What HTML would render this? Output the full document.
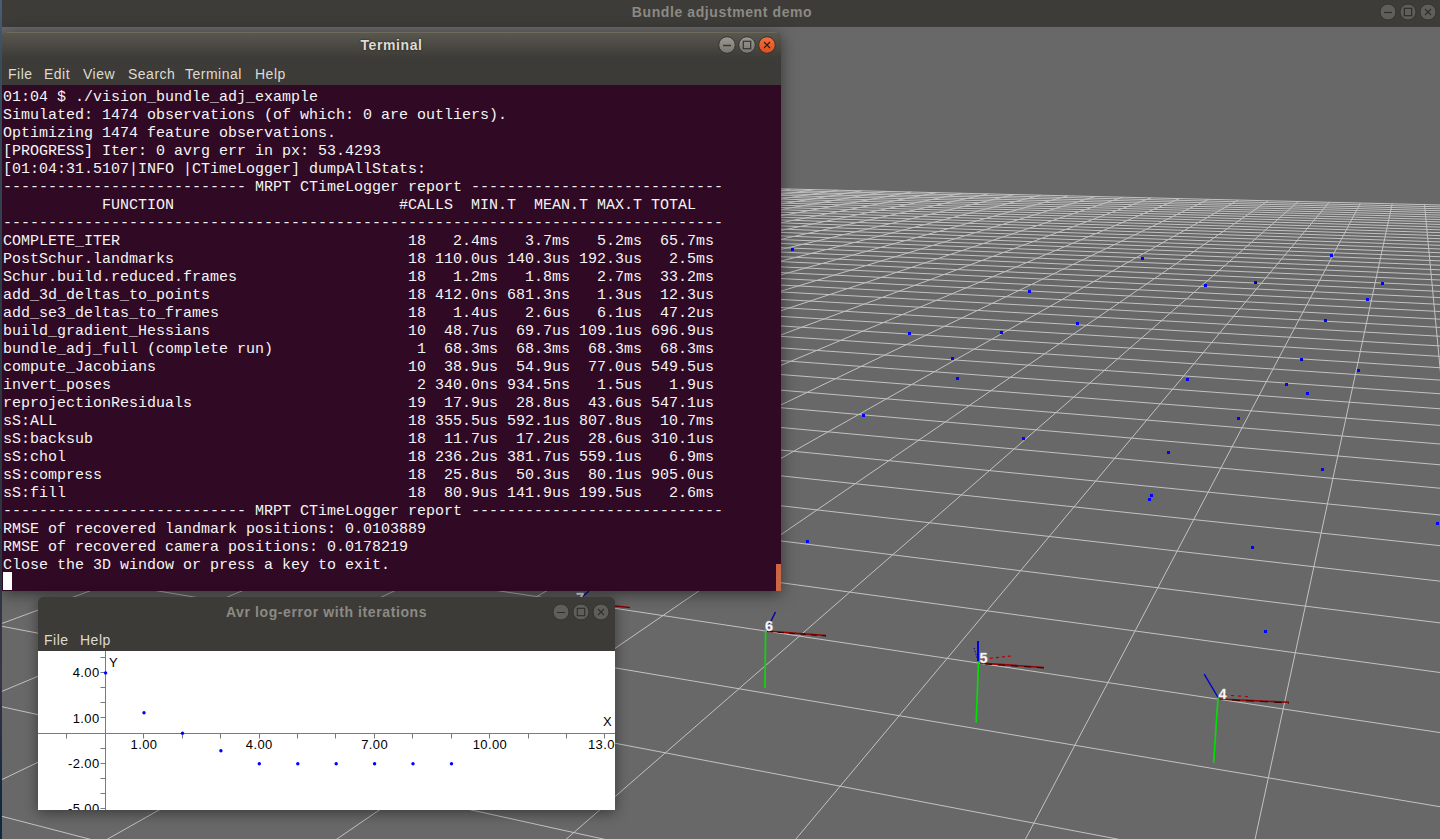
<!DOCTYPE html>
<html><head><meta charset="utf-8">
<style>
*{box-sizing:border-box}
html,body{margin:0;padding:0}
body{width:1440px;height:839px;overflow:hidden;position:relative;background:#686868;font-family:"Liberation Sans",sans-serif}
.abs{position:absolute}
svg{display:block}
#scene{position:absolute;left:0;top:0}
#topbar{left:0;top:0;width:1440px;height:27px;background:#3d3c38}
#topbar .ttl{position:absolute;left:2px;width:1440px;top:4px;text-align:center;color:#8c8a84;font-weight:bold;font-size:14px;letter-spacing:0.6px}
#lstrip{left:0;top:0;width:2px;height:839px;background:linear-gradient(#4a5f78 0,#3a4c5e 60px,#2c3a44 300px,#2b3540 560px,#3a3346 680px,#0e2a40 800px);z-index:5}
#term{left:2px;top:32px;width:779px;height:559px;background:#3c3b37;border-radius:6px 6px 0 0;overflow:hidden}
#termshadow{left:2px;top:32px;width:779px;height:559px;border-radius:6px 6px 0 0;box-shadow:0 3px 16px rgba(0,0,0,0.5)}
#term .tb{position:absolute;left:0;top:0;width:779px;height:26px;background:linear-gradient(#5a5850,#3c3b37);box-shadow:inset 0 1px #6c6a5a}
#term .tb .ttl{position:absolute;left:0;width:779px;top:5px;text-align:center;color:#dfdbd2;font-weight:bold;font-size:14px;letter-spacing:0.6px;text-shadow:0 0 2px #1a1916}
#term .mb{position:absolute;left:0;top:26px;width:779px;height:27px;background:#3c3b37;color:#dfdbd2;font-size:14px;letter-spacing:0.5px}
#term .mb span{position:absolute;top:8px}
#term pre{position:absolute;left:1px;top:57px;margin:0;font-family:"Liberation Mono",monospace;font-size:15px;line-height:18px;color:#f4f4f4;white-space:pre}
#cursor{left:1px;top:540px;width:9px;height:18px;background:#ffffff}
#sbar{left:774px;top:532px;width:5px;height:27px;background:#cb6543}
#plot{left:38px;top:597px;width:577px;height:213px;background:#3c3b37;border-radius:6px 6px 0 0;overflow:hidden}
#plotshadow{left:38px;top:597px;width:577px;height:213px;border-radius:6px 6px 0 0;box-shadow:0 3px 14px rgba(0,0,0,0.45)}
#plot .tb{position:absolute;left:0;top:0;width:577px;height:31px;background:#3c3b37}
#plot .tb .ttl{position:absolute;left:0;width:577px;top:7px;text-align:center;color:#8c8a84;font-weight:bold;font-size:14px;letter-spacing:0.6px}
#plot .mb{position:absolute;left:0;top:30px;width:577px;height:24px;background:#3c3b37;color:#dfdbd2;font-size:14px;letter-spacing:0.5px}
#plot .mb span{position:absolute;top:5px}
#plot svg{position:absolute;left:0;top:54px}
.btns{position:absolute}
</style></head><body>
<svg id="scene" width="1440" height="839" viewBox="0 0 1440 839">
<path d="M-608.5 154.8L-500561.0 13631.1M-599.9 155.0L-496436.1 13628.9M-591.3 155.2L-492311.2 13626.7M-582.6 155.5L-488186.3 13624.5M-573.8 155.7L-484061.4 13622.3M-564.9 155.9L-479936.5 13620.1M-556.0 156.1L-475811.6 13617.9M-547.0 156.3L-471686.7 13615.7M-537.9 156.5L-467561.8 13613.5M-528.8 156.8L-463436.9 13611.3M-519.6 157.0L-459312.0 13609.1M-510.3 157.2L-455187.1 13606.9M-500.9 157.5L-451062.2 13604.8M-491.4 157.7L-446937.3 13602.6M-481.9 157.9L-442812.4 13600.4M-472.3 158.2L-438687.5 13598.2M-462.6 158.4L-434562.6 13596.0M-452.8 158.6L-430437.7 13593.8M-442.9 158.9L-426312.8 13591.6M-433.0 159.1L-422187.9 13589.4M-422.9 159.4L-418063.0 13587.2M-412.8 159.6L-413938.1 13585.0M-402.6 159.9L-409813.2 13582.8M-392.3 160.1L-405688.3 13580.6M-381.9 160.4L-401563.4 13578.4M-371.4 160.6L-397438.5 13576.2M-360.8 160.9L-393313.6 13574.0M-350.1 161.1L-389188.7 13571.8M-339.3 161.4L-385063.8 13569.6M-328.5 161.7L-380938.9 13567.4M-317.5 161.9L-376814.0 13565.2M-306.4 162.2L-372689.1 13563.0M-295.3 162.5L-368564.2 13560.9M-284.0 162.8L-364439.3 13558.7M-272.6 163.0L-360314.4 13556.5M-261.1 163.3L-356189.5 13554.3M-249.5 163.6L-352064.6 13552.1M-237.8 163.9L-347939.7 13549.9M-226.0 164.2L-343814.8 13547.7M-214.1 164.5L-339689.9 13545.5M-202.0 164.8L-335565.0 13543.3M-189.9 165.1L-331440.1 13541.1M-177.6 165.4L-327315.2 13538.9M-165.2 165.7L-323190.3 13536.7M-152.7 166.0L-319065.4 13534.5M-140.1 166.3L-314940.5 13532.3M-127.3 166.6L-310815.6 13530.1M-114.4 166.9L-306690.7 13527.9M-101.4 167.2L-302565.8 13525.7M-88.3 167.6L-298440.9 13523.5M-75.0 167.9L-294316.0 13521.3M-61.6 168.2L-290191.1 13519.1M-48.1 168.5L-286066.2 13517.0M-34.4 168.9L-281941.3 13514.8M-20.6 169.2L-277816.4 13512.6M-6.7 169.6L-273691.5 13510.4M7.4 169.9L-269566.6 13508.2M21.7 170.3L-265441.7 13506.0M36.1 170.6L-261316.8 13503.8M50.6 171.0L-257191.9 13501.6M65.3 171.3L-253067.0 13499.4M80.2 171.7L-248942.1 13497.2M95.2 172.1L-244817.2 13495.0M110.4 172.4L-240692.3 13492.8M125.7 172.8L-236567.4 13490.6M141.2 173.2L-232442.5 13488.4M156.9 173.6L-228317.6 13486.2M172.7 174.0L-224192.7 13484.0M188.7 174.4L-220067.8 13481.8M204.9 174.7L-215942.9 13479.6M221.3 175.1L-211818.0 13477.4M237.8 175.6L-207693.1 13475.2M254.5 176.0L-203568.2 13473.1M271.5 176.4L-199443.3 13470.9M288.6 176.8L-195318.4 13468.7M305.9 177.2L-191193.5 13466.5M323.4 177.7L-187068.6 13464.3M341.1 178.1L-182943.7 13462.1M359.1 178.5L-178818.8 13459.9M377.2 179.0L-174693.9 13457.7M395.5 179.4L-170569.0 13455.5M414.1 179.9L-166444.2 13453.3M432.9 180.3L-162319.3 13451.1M451.9 180.8L-158194.4 13448.9M471.1 181.3L-154069.5 13446.7M490.6 181.7L-149944.6 13444.5M510.3 182.2L-145819.7 13442.3M530.2 182.7L-141694.8 13440.1M550.4 183.2L-137569.9 13437.9M570.9 183.7L-133445.0 13435.7M591.6 184.2L-129320.1 13433.5M612.5 184.7L-125195.2 13431.3M633.7 185.3L-121070.3 13429.2M655.2 185.8L-116945.4 13427.0M677.0 186.3L-112820.5 13424.8M699.1 186.9L-108695.6 13422.6M721.4 187.4L-104570.7 13420.4M744.0 188.0L-100445.8 13418.2M766.9 188.5L-96320.9 13416.0M790.2 189.1L-92196.0 13413.8M813.7 189.7L-88071.1 13411.6M837.6 190.2L-83946.2 13409.4M861.7 190.8L-79821.3 13407.2M886.2 191.4L-75696.4 13405.0M911.1 192.0L-71571.5 13402.8M936.3 192.7L-67446.6 13400.6M961.8 193.3L-63321.7 13398.4M987.7 193.9L-59196.8 13396.2M1013.9 194.6L-55071.9 13394.0M1040.5 195.2L-50947.0 13391.8M1067.5 195.9L-46822.1 13389.6M1094.9 196.6L-42697.2 13387.4M1122.7 197.2L-38572.3 13385.3M1150.9 197.9L-34447.4 13383.1M1179.5 198.6L-30322.5 13380.9M1208.6 199.3L-26197.6 13378.7M1238.0 200.1L-22072.7 13376.5M1267.9 200.8L-17947.8 13374.3M1298.3 201.5L-13822.9 13372.1M1329.1 202.3L-9698.0 13369.9M1360.4 203.1L-5573.1 13367.7M1392.2 203.8L-1448.2 13365.5M1424.5 204.6L2676.7 13363.3M1457.2 205.4L6801.6 13361.1M1490.5 206.2L10926.5 13358.9M1524.4 207.1L15051.4 13356.7M1558.8 207.9L19176.3 13354.5M1593.7 208.8L23301.2 13352.3M1629.2 209.6L27426.1 13350.1M1665.3 210.5L31551.0 13347.9M1702.0 211.4L35675.9 13345.7M1739.3 212.3L39800.8 13343.5M1777.3 213.3L43925.7 13341.4M1815.8 214.2L48050.6 13339.2M1855.1 215.2L52175.5 13337.0M1895.0 216.2L56300.4 13334.8M1935.7 217.2L60425.3 13332.6M1977.0 218.2L64550.2 13330.4M2019.1 219.2L68675.1 13328.2M2062.0 220.2L72800.0 13326.0M2105.6 221.3L76924.9 13323.8M2150.0 222.4L81049.8 13321.6M2195.3 223.5L85174.7 13319.4M2241.4 224.6L89299.6 13317.2M2288.4 225.8L93424.5 13315.0M2336.2 227.0L97549.4 13312.8M2385.0 228.2L101674.3 13310.6M2434.7 229.4L105799.2 13308.4M2485.4 230.6L109924.1 13306.2M2537.1 231.9L114049.0 13304.0M2589.8 233.2L118173.9 13301.8M2643.6 234.5L122298.8 13299.6M2698.5 235.8L126423.7 13297.5M2754.5 237.2L130548.6 13295.3M2811.7 238.6L134673.5 13293.1M2870.1 240.0L138798.4 13290.9M2929.7 241.5L142923.3 13288.7M2990.7 243.0L147048.2 13286.5M3052.9 244.5L151173.1 13284.3M3116.5 246.1L155298.0 13282.1M3181.5 247.7L159422.9 13279.9M3248.0 249.3L163547.8 13277.7M3315.9 251.0L167672.7 13275.5M3385.5 252.7L171797.6 13273.3M3456.6 254.4L175922.5 13271.1M3529.4 256.2L180047.4 13268.9M3604.0 258.0L184172.3 13266.7M3680.3 259.9L188297.2 13264.5M3758.5 261.8L192422.1 13262.3M3838.6 263.8L196547.0 13260.1M3920.8 265.8L200671.9 13257.9M4005.0 267.8L204796.8 13255.7M4091.3 270.0L208921.7 13253.6M4179.9 272.1L213046.6 13251.4M4270.8 274.4L217171.5 13249.2M4364.2 276.6L221296.4 13247.0M4460.1 279.0L225421.3 13244.8M4558.5 281.4L229546.2 13242.6M4659.7 283.9L233671.1 13240.4M4763.8 286.4L237796.0 13238.2M4870.8 289.1L241920.9 13236.0M4980.9 291.8L246045.8 13233.8M5094.3 294.5L250170.7 13231.6M5211.0 297.4L254295.6 13229.4M5331.3 300.3L258420.5 13227.2M5455.2 303.4L262545.4 13225.0M5583.0 306.5L266670.3 13222.8M5714.9 309.7L270795.2 13220.6M5851.0 313.1L274920.1 13218.4M5991.5 316.5L279045.0 13216.2M6136.8 320.1L283169.9 13214.0M6286.9 323.8L287294.8 13211.8M6442.2 327.6L291419.7 13209.7M6602.9 331.5L295544.6 13207.5M6769.4 335.6L299669.5 13205.3M6941.9 339.8L303794.4 13203.1M7120.7 344.2L307919.3 13200.9M7306.3 348.7L312044.2 13198.7M7499.1 353.5L316169.1 13196.5M7699.3 358.4L320294.0 13194.3M7907.5 363.5L324418.9 13192.1M8124.2 368.8L328543.8 13189.9M8350.0 374.3L332668.7 13187.7M8585.2 380.1L336793.6 13185.5M8830.7 386.1L340918.5 13183.3M9087.1 392.4L345043.4 13181.1M9355.0 398.9L349168.3 13178.9M9635.4 405.8L353293.2 13176.7M9929.1 413.0L357418.1 13174.5M10237.1 420.5L361543.0 13172.3M10560.4 428.5L365667.9 13170.1M10900.2 436.8L369792.8 13167.9M11257.8 445.5L373917.7 13165.7M11634.7 454.8L378042.6 13163.6M12032.4 464.5L382167.5 13161.4M12452.8 474.8L386292.4 13159.2M12897.8 485.7L390417.3 13157.0M13369.6 497.3L394542.2 13154.8M13870.8 509.6L398667.1 13152.6M14404.2 522.6L402792.0 13150.4M14972.9 536.6L406916.9 13148.2M15580.6 551.4L411041.8 13146.0M16231.6 567.4L415166.7 13143.8M16930.5 584.5L419291.6 13141.6M17682.8 602.9L423416.5 13139.4M18494.9 622.8L427541.4 13137.2M19374.4 644.4L431666.3 13135.0M20329.7 667.8L435791.2 13132.8M21371.4 693.3L439916.1 13130.6M22511.5 721.3L444041.0 13128.4M23764.8 752.0L448165.9 13126.2M25149.0 785.9L452290.8 13124.0M26685.7 823.5L456415.7 13121.8M28401.5 865.6L460540.6 13119.7M30329.9 912.8L464665.5 13117.5M32512.8 966.3L468790.4 13115.3M35004.2 1027.3L472915.3 13113.1M37874.5 1097.6L477040.2 13110.9M41217.3 1179.5L481165.1 13108.7M45159.5 1276.1L485290.0 13106.5M49878.5 1391.7L489414.9 13104.3M-608.5 154.8L49878.5 1391.7M-626.7 155.3L63545.0 1755.9M-645.3 155.8L87946.5 2406.2M-664.2 156.3L143911.8 3897.5M-683.4 156.8L404813.3 10849.9M-703.0 157.4L481076.4 13108.7M-723.0 157.9L471865.8 13113.6M-743.3 158.5L462655.2 13118.5M-764.1 159.0L453444.5 13123.4M-785.2 159.6L444233.9 13128.3M-806.8 160.2L435023.3 13133.2M-828.8 160.8L425812.7 13138.1M-851.2 161.4L416602.0 13143.0M-874.1 162.0L407391.4 13147.9M-897.4 162.6L398180.8 13152.8M-921.2 163.2L388970.2 13157.7M-945.6 163.9L379759.5 13162.6M-970.4 164.6L370548.9 13167.5M-995.8 165.3L361338.3 13172.4M-1021.7 166.0L352127.7 13177.3M-1048.1 166.7L342917.1 13182.2M-1075.2 167.4L333706.4 13187.1M-1102.9 168.1L324495.8 13192.0M-1131.1 168.9L315285.2 13197.0M-1160.1 169.7L306074.6 13201.9M-1189.6 170.5L296863.9 13206.8M-1219.9 171.3L287653.3 13211.7M-1250.9 172.1L278442.7 13216.6M-1282.6 173.0L269232.1 13221.5M-1315.1 173.9L260021.4 13226.4M-1348.4 174.8L250810.8 13231.3M-1382.5 175.7L241600.2 13236.2M-1417.4 176.6L232389.6 13241.1M-1453.3 177.6L223178.9 13246.0M-1490.0 178.6L213968.3 13250.9M-1527.7 179.6L204757.7 13255.8M-1566.4 180.6L195547.1 13260.7M-1606.1 181.7L186336.4 13265.6M-1646.9 182.8L177125.8 13270.5M-1688.9 183.9L167915.2 13275.4M-1732.0 185.1L158704.6 13280.3M-1776.3 186.3L149493.9 13285.2M-1821.8 187.5L140283.3 13290.1M-1868.7 188.8L131072.7 13295.0M-1917.0 190.1L121862.1 13299.9M-1966.7 191.4L112651.4 13304.8M-2017.9 192.8L103440.8 13309.7M-2070.7 194.2L94230.2 13314.6M-2125.1 195.7L85019.6 13319.5M-2181.3 197.2L75808.9 13324.4M-2239.2 198.8L66598.3 13329.3M-2299.1 200.4L57387.7 13334.2M-2361.0 202.1L48177.1 13339.1M-2424.9 203.8L38966.4 13344.0M-2491.1 205.6L29755.8 13348.9M-2559.6 207.4L20545.2 13353.8M-2630.5 209.3L11334.6 13358.7M-2704.0 211.3L2124.0 13363.6M-2780.2 213.4L-7086.7 13368.5M-2859.3 215.5L-16297.3 13373.4M-2941.5 217.7L-25507.9 13378.3M-3026.8 220.0L-34718.5 13383.2M-3115.6 222.4L-43929.2 13388.1M-3208.0 224.9L-53139.8 13393.0M-3304.3 227.5L-62350.4 13397.9M-3404.6 230.2L-71561.0 13402.8M-3509.3 233.0L-80771.7 13407.7M-3618.7 236.0L-89982.3 13412.6M-3733.0 239.0L-99192.9 13417.5M-3852.6 242.3L-108403.5 13422.4M-3977.9 245.6L-117614.2 13427.3M-4109.4 249.2L-126824.8 13432.2M-4247.4 252.9L-136035.4 13437.1M-4392.4 256.8L-145246.0 13442.0M-4545.1 260.9L-154456.7 13446.9M-4706.1 265.3L-163667.3 13451.8M-4876.0 269.9L-172877.9 13456.7M-5055.6 274.7L-182088.5 13461.6M-5245.7 279.8L-191299.2 13466.5M-5447.4 285.3L-200509.8 13471.4M-5661.6 291.0L-209720.4 13476.3M-5889.7 297.2L-218931.0 13481.2M-6132.9 303.7L-228141.7 13486.1M-6392.9 310.7L-237352.3 13491.0M-6671.5 318.2L-246562.9 13495.9M-6970.6 326.3L-255773.5 13500.8M-7292.8 335.0L-264984.2 13505.7M-7640.7 344.4L-274194.8 13510.6M-8017.5 354.5L-283405.4 13515.5M-8427.1 365.6L-292616.0 13520.4M-8873.9 377.6L-301826.7 13525.3M-9363.2 390.8L-311037.3 13530.2M-9901.3 405.3L-320247.9 13535.1M-10496.0 421.3L-329458.5 13540.0M-11156.7 439.1L-338669.2 13544.9M-11894.9 459.0L-347879.8 13549.8M-12725.3 481.4L-357090.4 13554.7M-13666.2 506.8L-366301.0 13559.6M-14741.2 535.8L-375511.6 13564.5M-15981.3 569.2L-384722.3 13569.5M-17427.6 608.2L-393932.9 13574.4M-19136.1 654.2L-403143.5 13579.3M-21185.4 709.5L-412354.1 13584.2M-23688.7 776.9L-421564.8 13589.1M-26815.6 861.2L-430775.4 13594.0M-30832.3 969.5L-439986.0 13598.9M-36181.7 1113.7L-449196.6 13603.8M-43658.9 1315.2L-458407.3 13608.7M-54848.5 1616.9L-467617.9 13613.6M-73428.6 2117.7L-476828.5 13618.5M-110331.1 3112.4L-486039.1 13623.4M-219019.2 6042.1L-495249.8 13628.3" stroke="#c2c2c2" stroke-width="1" fill="none"/>
<g fill="#0000ff"><rect x="791" y="248" width="3" height="3"/><rect x="1141" y="257" width="3" height="3"/><rect x="1330" y="254" width="3" height="3"/><rect x="1028" y="290" width="3" height="3"/><rect x="1204" y="284" width="3" height="3"/><rect x="1254" y="281" width="3" height="3"/><rect x="1255" y="282" width="2" height="2" fill="#000030"/><rect x="1381" y="282" width="3" height="3"/><rect x="1366" y="298" width="3" height="3"/><rect x="1324" y="319" width="3" height="3"/><rect x="908" y="332" width="3" height="3"/><rect x="1000" y="331" width="3" height="3"/><rect x="1076" y="322" width="3" height="3"/><rect x="951" y="357" width="3" height="3"/><rect x="956" y="377" width="3" height="3"/><rect x="1300" y="358" width="3" height="3"/><rect x="1301" y="359" width="2" height="2" fill="#000030"/><rect x="1357" y="369" width="3" height="3"/><rect x="1186" y="378" width="3" height="3"/><rect x="1285" y="383" width="3" height="3"/><rect x="1306" y="392" width="3" height="3"/><rect x="862" y="414" width="3" height="3"/><rect x="1237" y="417" width="3" height="3"/><rect x="1022" y="437" width="3" height="3"/><rect x="1167" y="451" width="3" height="3"/><rect x="1321" y="468" width="3" height="3"/><rect x="1150" y="494" width="3" height="3"/><rect x="1148" y="498" width="3" height="3"/><rect x="806" y="540" width="3" height="3"/><rect x="1251" y="546" width="3" height="3"/><rect x="1436" y="522" width="3" height="3"/><rect x="1264" y="630" width="3" height="3"/></g>
<g fill="none" stroke-linecap="butt">
<path d="M765.6 631L765 688" stroke="#00e000" stroke-width="1.7" />
<path d="M767 631L826 635.5" stroke="#9a0000" stroke-width="1.6" />
<path d="M767 631.5L826 636" stroke="#300000" stroke-width="1" stroke-dasharray="6 5"/>
<path d="M766.5 630L775.5 612" stroke="#0000b0" stroke-width="1.4" />
<path d="M978 641L978 661" stroke="#0000e0" stroke-width="2" />
<path d="M978.5 662L976.2 722.5" stroke="#00e000" stroke-width="1.7" />
<path d="M980 663L1044 667.5" stroke="#9a0000" stroke-width="1.6" />
<path d="M985 664L1044 668" stroke="#300000" stroke-width="1" stroke-dasharray="7 6"/>
<path d="M984 659L1011 656" stroke="#b00000" stroke-width="1.2" stroke-dasharray="3 3"/>
<path d="M974 648L977.5 659" stroke="#0000c0" stroke-width="1" stroke-dasharray="1.5 1.5"/>
<path d="M1204.2 674.2L1217.8 697" stroke="#0000d0" stroke-width="1.4" />
<path d="M1218 698L1213.6 762.7" stroke="#00e000" stroke-width="1.7" />
<path d="M1219 699L1289 702.3" stroke="#9a0000" stroke-width="1.6" />
<path d="M1232 700L1289 703" stroke="#300000" stroke-width="1" stroke-dasharray="8 6"/>
<path d="M1224 695L1252 697" stroke="#b00000" stroke-width="1.2" stroke-dasharray="3 4"/>
<path d="M582 597L589 591" stroke="#0000b0" stroke-width="1.4" />
<path d="M615 606L630 607.5" stroke="#8a0000" stroke-width="1.6" />
<g font-family="Liberation Sans" font-size="14.5" font-weight="bold" fill="#ffffff" stroke="#d0d0d0" stroke-width="0.3">
<text x="765" y="630.5">6</text><text x="979.5" y="662.5">5</text><text x="1218.5" y="698.5">4</text><text x="576" y="603">7</text>
</g>
</g>
</svg>
<div id="lstrip" class="abs"></div>
<div id="topbar" class="abs"><div class="ttl">Bundle adjustment demo</div>
<svg class="btns" style="left:1376px;top:0px" width="64" height="26" viewBox="0 0 64 26">
<g stroke="#34332f" stroke-width="1" fill="#5f5e58"><circle cx="12" cy="12" r="8"/><circle cx="32" cy="12" r="8"/><circle cx="52" cy="12" r="8"/></g>
<g stroke="#2f2e2a" stroke-width="1.2" fill="none"><path d="M8 12.5H16"/><rect x="28.3" y="8.3" width="7.4" height="7.4"/><path d="M49 9L55 15M55 9L49 15"/></g>
</svg>
</div>

<div id="termshadow" class="abs"></div>
<div id="term" class="abs">
<div class="tb"><div class="ttl">Terminal</div>
<svg class="btns" style="left:714px;top:2px" width="64" height="22" viewBox="0 0 64 22">
<defs><linearGradient id="gg" x1="0" y1="0" x2="0" y2="1"><stop offset="0" stop-color="#9a9892"/><stop offset="1" stop-color="#78766f"/></linearGradient>
<linearGradient id="og" x1="0" y1="0" x2="0" y2="1"><stop offset="0" stop-color="#f3703e"/><stop offset="1" stop-color="#de4e1c"/></linearGradient></defs>
<g stroke="#33322e" stroke-width="1"><circle cx="11" cy="11" r="8.3" fill="url(#gg)"/><circle cx="31" cy="11" r="8.3" fill="url(#gg)"/><circle cx="51" cy="11" r="8.3" fill="url(#og)"/></g>
<g stroke="#3a3935" stroke-width="1.3" fill="none"><path d="M7 11.5H15"/><rect x="27.3" y="7.3" width="7.4" height="7.4"/><path stroke="#2a1a10" stroke-width="1.1" d="M48 8L54 14M54 8L48 14"/></g>
</svg>
</div>
<div class="mb"><span style="left:6px">File</span><span style="left:42px">Edit</span><span style="left:81px">View</span><span style="left:126px">Search</span><span style="left:183px">Terminal</span><span style="left:253px">Help</span></div>
<div class="abs" style="left:0;top:53px;width:779px;height:506px;background:#300a24"></div>
<pre>01:04 $ ./vision_bundle_adj_example
Simulated: 1474 observations (of which: 0 are outliers).
Optimizing 1474 feature observations.
[PROGRESS] Iter: 0 avrg err in px: 53.4293
[01:04:31.5107|INFO |CTimeLogger] dumpAllStats:
--------------------------- MRPT CTimeLogger report ----------------------------
           FUNCTION                         #CALLS  MIN.T  MEAN.T MAX.T TOTAL
--------------------------------------------------------------------------------
COMPLETE_ITER                                18   2.4ms   3.7ms   5.2ms  65.7ms
PostSchur.landmarks                          18 110.0us 140.3us 192.3us   2.5ms
Schur.build.reduced.frames                   18   1.2ms   1.8ms   2.7ms  33.2ms
add_3d_deltas_to_points                      18 412.0ns 681.3ns   1.3us  12.3us
add_se3_deltas_to_frames                     18   1.4us   2.6us   6.1us  47.2us
build_gradient_Hessians                      10  48.7us  69.7us 109.1us 696.9us
bundle_adj_full (complete run)                1  68.3ms  68.3ms  68.3ms  68.3ms
compute_Jacobians                            10  38.9us  54.9us  77.0us 549.5us
invert_poses                                  2 340.0ns 934.5ns   1.5us   1.9us
reprojectionResiduals                        19  17.9us  28.8us  43.6us 547.1us
sS:ALL                                       18 355.5us 592.1us 807.8us  10.7ms
sS:backsub                                   18  11.7us  17.2us  28.6us 310.1us
sS:chol                                      18 236.2us 381.7us 559.1us   6.9ms
sS:compress                                  18  25.8us  50.3us  80.1us 905.0us
sS:fill                                      18  80.9us 141.9us 199.5us   2.6ms
--------------------------- MRPT CTimeLogger report ----------------------------
RMSE of recovered landmark positions: 0.0103889
RMSE of recovered camera positions: 0.0178219
Close the 3D window or press a key to exit.</pre>
<div id="cursor" class="abs"></div>
<div id="sbar" class="abs"></div>
</div>

<div id="plotshadow" class="abs"></div>
<div id="plot" class="abs">
<div class="tb"><div class="ttl">Avr log-error with iterations</div>
<svg class="btns" style="left:512px;top:5px" width="64" height="22" viewBox="0 0 64 22">
<g stroke="#34332f" stroke-width="1" fill="#5f5e58"><circle cx="11" cy="10" r="8"/><circle cx="31" cy="10" r="8"/><circle cx="51" cy="10" r="8"/></g>
<g stroke="#2f2e2a" stroke-width="1.1" fill="none"><path d="M7 10.5H15"/><rect x="27.3" y="6.3" width="7.4" height="7.4"/><path d="M48 7L54 13M54 7L48 13"/></g>
</svg>
</div>
<div class="mb"><span style="left:6px">File</span><span style="left:42px">Help</span></div>
<div class="abs" style="left:0;top:54px;width:577px;height:159px;background:#fff"></div>
<svg width="577" height="159" viewBox="0 0 577 159">
<g stroke="#7a7a7a" stroke-width="1" fill="none">
<path d="M67.5 0V159M0 82.5H577"/>
<path d="M28.5 82.5V87.5"/>
<path d="M105.5 82.5V87.5"/>
<path d="M144.5 82.5V87.5"/>
<path d="M182.5 82.5V87.5"/>
<path d="M221.5 82.5V87.5"/>
<path d="M259.5 82.5V87.5"/>
<path d="M297.5 82.5V87.5"/>
<path d="M336.5 82.5V87.5"/>
<path d="M374.5 82.5V87.5"/>
<path d="M413.5 82.5V87.5"/>
<path d="M451.5 82.5V87.5"/>
<path d="M490.5 82.5V87.5"/>
<path d="M528.5 82.5V87.5"/>
<path d="M566.5 82.5V87.5"/>
<path d="M62.5 6.5H67.5"/>
<path d="M62.5 21.5H67.5"/>
<path d="M62.5 36.5H67.5"/>
<path d="M62.5 51.5H67.5"/>
<path d="M62.5 66.5H67.5"/>
<path d="M62.5 97.5H67.5"/>
<path d="M62.5 112.5H67.5"/>
<path d="M62.5 127.5H67.5"/>
<path d="M62.5 142.5H67.5"/>
<path d="M62.5 157.5H67.5"/>
</g>
<g font-family="Liberation Sans" font-size="13" fill="#000" letter-spacing="0.4">
<text x="61.6" y="26.2" text-anchor="end">4.00</text>
<text x="61.6" y="71.5" text-anchor="end">1.00</text>
<text x="61.6" y="116.8" text-anchor="end">-2.00</text>
<text x="61.6" y="162.1" text-anchor="end">-5.00</text>
<text x="106.0" y="98.0" text-anchor="middle">1.00</text>
<text x="221.3" y="98.0" text-anchor="middle">4.00</text>
<text x="336.6" y="98.0" text-anchor="middle">7.00</text>
<text x="451.9" y="98.0" text-anchor="middle">10.00</text>
<text x="567.2" y="98.0" text-anchor="middle">13.00</text>
<text x="71.1" y="16" font-size="13">Y</text>
<text x="565" y="75" font-size="13">X</text>
</g><g fill="#0000ff">
<circle cx="67.6" cy="21.9" r="1.7"/>
<circle cx="106.0" cy="61.8" r="1.7"/>
<circle cx="144.5" cy="82.3" r="1.7"/>
<circle cx="182.9" cy="99.7" r="1.7"/>
<circle cx="221.3" cy="112.7" r="1.7"/>
<circle cx="259.8" cy="112.7" r="1.7"/>
<circle cx="298.2" cy="112.7" r="1.7"/>
<circle cx="336.6" cy="112.7" r="1.7"/>
<circle cx="375.0" cy="112.7" r="1.7"/>
<circle cx="413.5" cy="112.7" r="1.7"/>
</g></svg>
</div>
</body></html>
